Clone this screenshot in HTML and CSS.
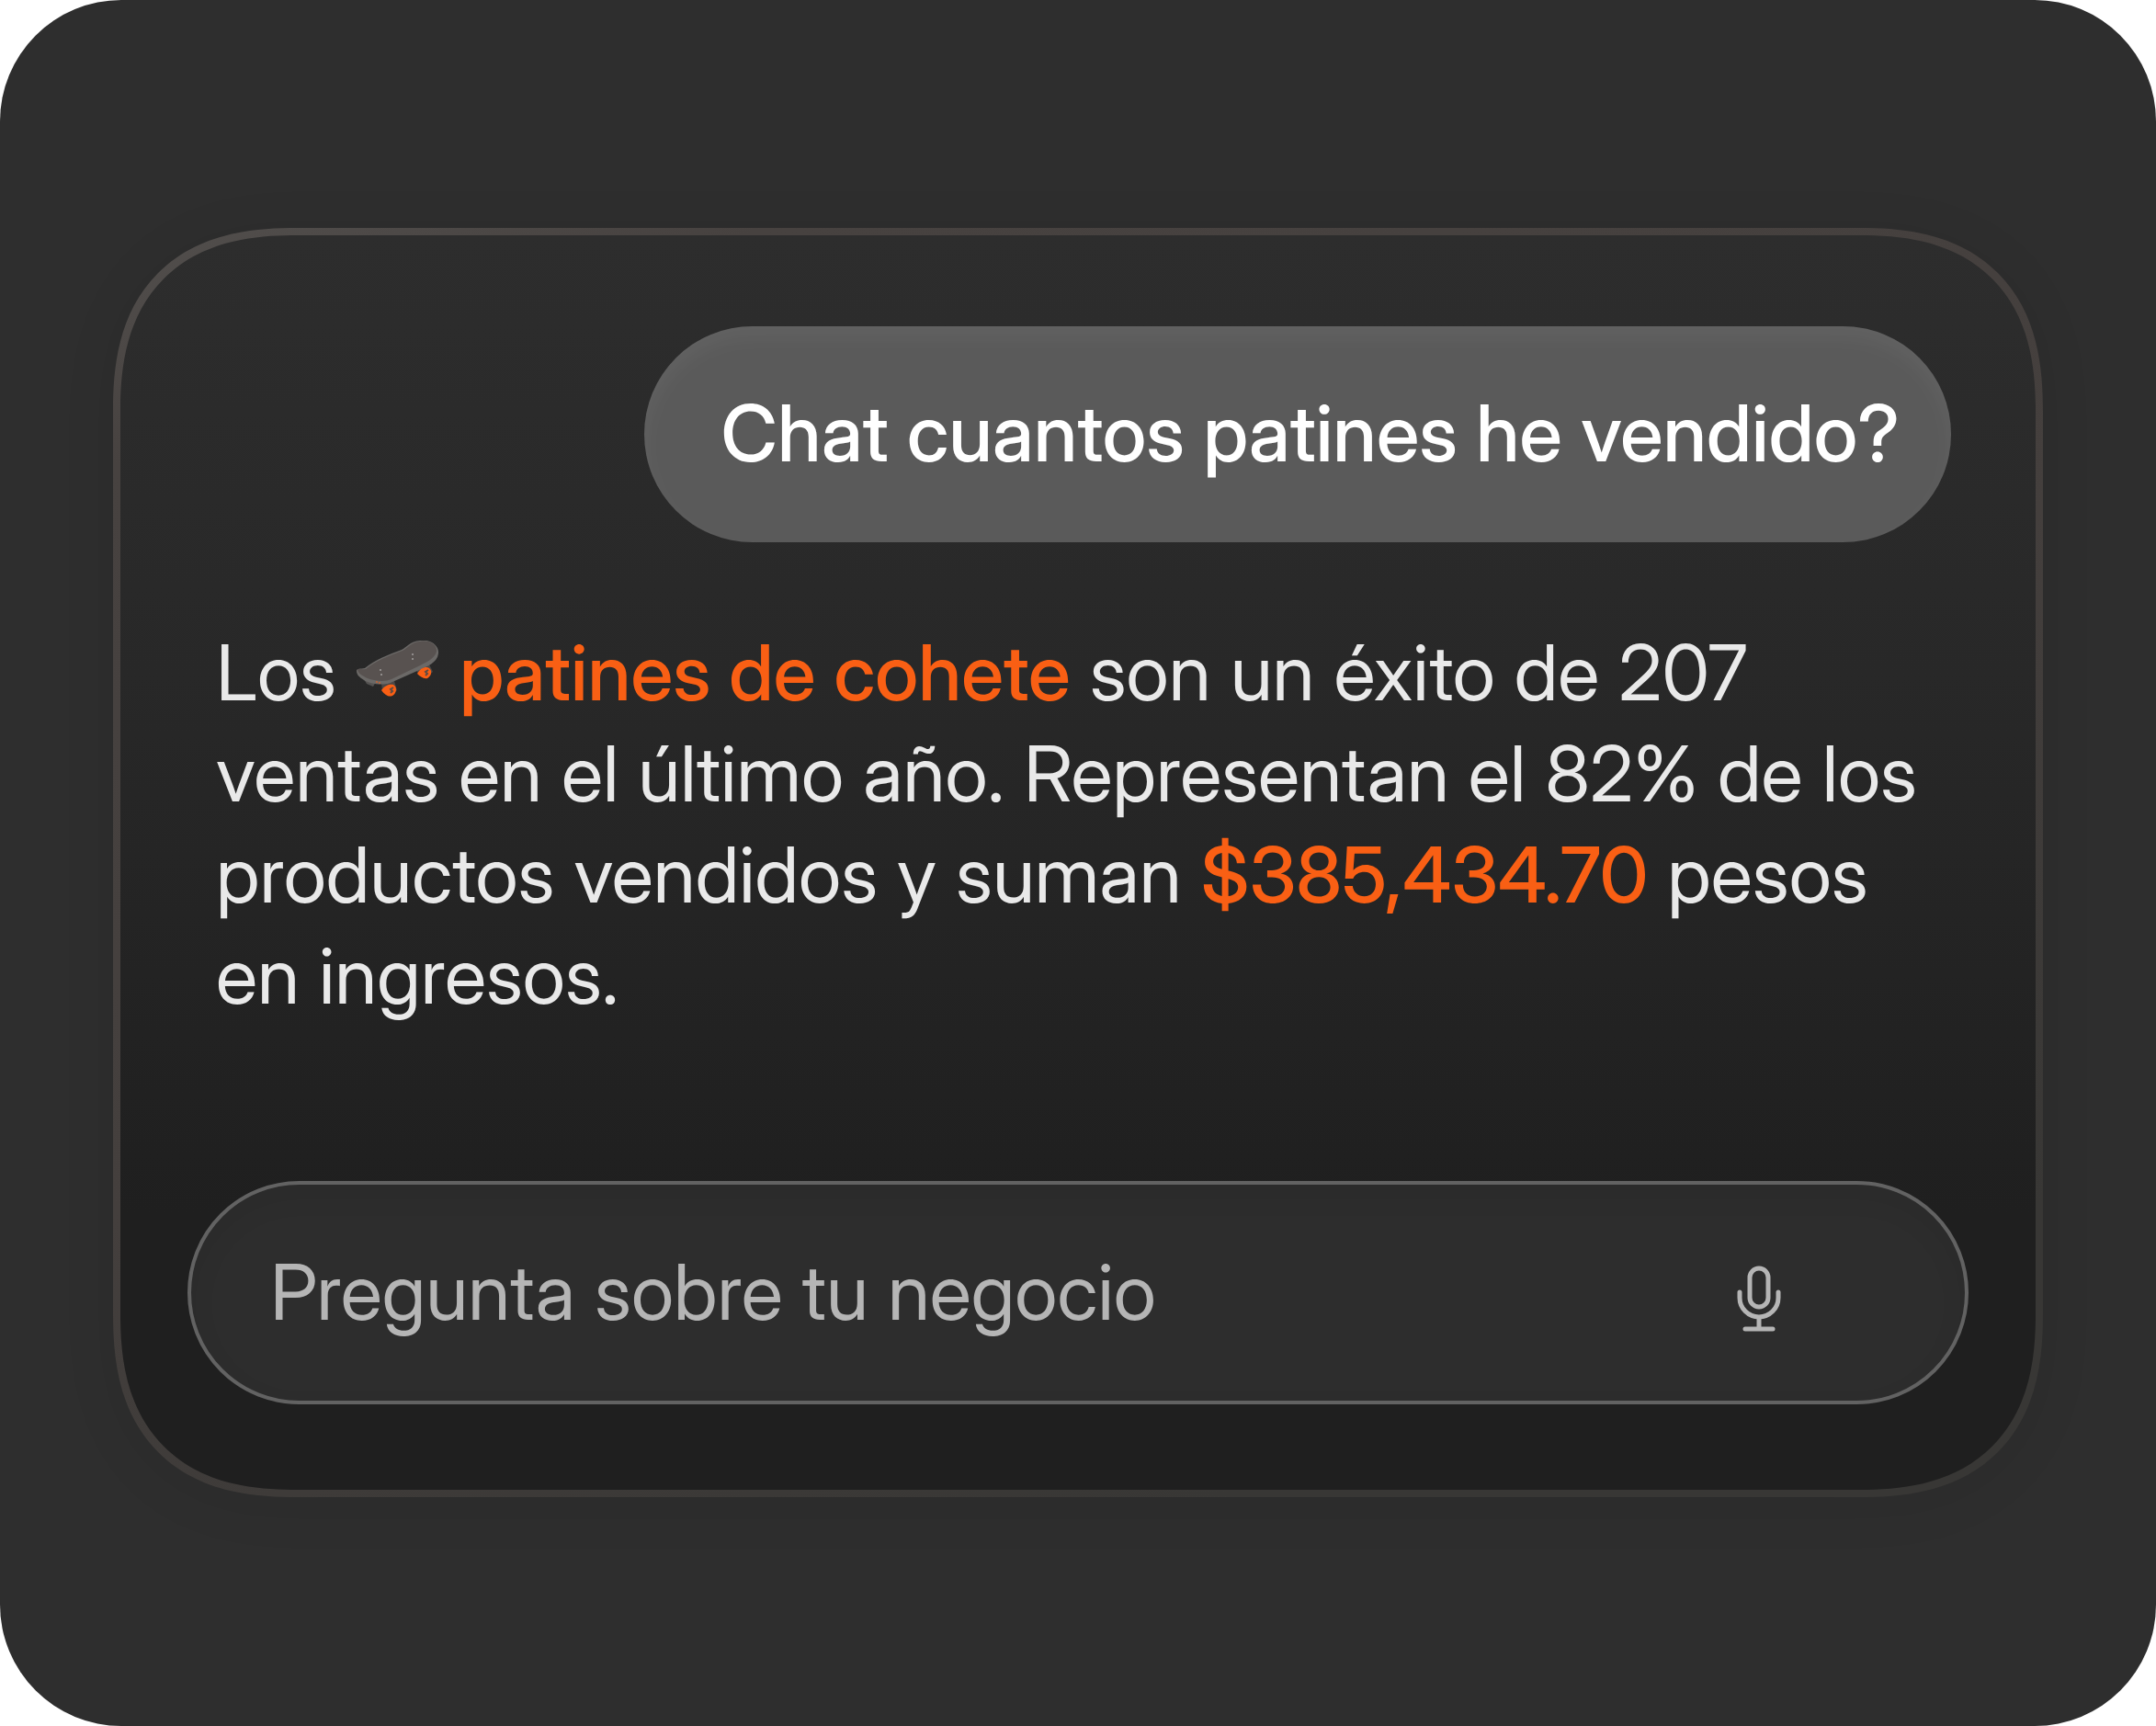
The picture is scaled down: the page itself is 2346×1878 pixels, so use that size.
FILE: index.html
```
<!DOCTYPE html>
<html lang="es">
<head>
    <meta charset="UTF-8">
    <meta name="viewport" content="width=device-width, initial-scale=1.0">
    <title>Chat de negocio</title>
    <link rel="stylesheet" href="styles.css">
</head>
<body>
    <main class="stage">
        <section class="panel">
            <p class="bubble">Chat cuantos patines he vendido?</p>

            <p class="answer">
                Los
                <svg class="skate" viewBox="0 0 92 62" aria-hidden="true">
                    <path d="M9 42 L22 45 L19 50 L12 47 Z" fill="#555352"/>
                    <path d="M66 32 L80 26 L84 34 L76 40 L68 36 Z" fill="#4a4847"/>
                    <path d="M28 47 L42 44 L45 54 L37 60 L29 54 Z" fill="#4a4847"/>
                    <path d="M1 33 C1 30 5 31 10 30 C21 21 36 15 50 10 C56 7 59 1 70 0 C82 -2 91 6 90 14 C89 24 78 28 67 33 L40 45 C31 50 15 47 9 43 C4 40 1 37 1 33 Z" fill="#6b6967"/>
                    <path d="M2 32 C2 30 6 32 11 31 C22 22 37 16 51 11 C57 8 60 2 70 1 C81 -1 89 5 88 12 C86 20 76 24 66 29 L39 42 C30 46 15 43 9 39 C5 37 3 35 2 32 Z" fill="#585250"/>
                    <g fill="#a3a19f">
                        <circle cx="27" cy="32" r="1"/>
                        <circle cx="28" cy="37" r="1"/>
                        <circle cx="62" cy="15" r="1"/>
                        <circle cx="62" cy="20" r="1"/>
                    </g>
                    <path d="M67 36 C71 29 77 28 80 30 C84 33 82 39 78 41 C74 42 70 39 67 36 Z" fill="#f95f14"/>
                    <path d="M28 54 C32 48 38 47 41 48 C46 51 44 58 40 60 C35 62 31 58 28 54 Z" fill="#f95f14"/>
                    <path d="M79 32 L76 34 L78 36 L76 38 M41 51 L38 53 L40 55 L38 57" fill="none" stroke="#5c4c44" stroke-width="2"/>
                    <path d="M22 45 H24 M25 46 H27" stroke="#f95f14" stroke-width="1"/>
                </svg>
                <strong>patines de cohete</strong>
                son un éxito de 207 ventas en el último año. Representan el 82% de los productos vendidos y suman <strong>$385,434.70</strong> pesos en ingresos.
            </p>

            <form class="ask">
                <input type="text" aria-label="Pregunta sobre tu negocio" placeholder="Pregunta sobre tu negocio">
                <button type="button" aria-label="Dictar">
                    <svg viewBox="0 0 48 72" fill="none" stroke="currentColor" stroke-width="5" stroke-linecap="round" aria-hidden="true">
                        <rect x="14" y="3" width="20" height="42" rx="10"/>
                        <path d="M3 29 V35 A21 21 0 0 0 45 35 V29 M24 56 V69 M9 69 H39"/>
                    </svg>
                </button>
            </form>
        </section>
    </main>
</body>
</html>
```
FILE: styles.css
```
* { box-sizing: border-box; }
body { margin: 0; background: #fff; font-family: "Inter Display", Inter, "Liberation Sans", sans-serif; font-size: 84px; line-height: 110px; color: #e9e9e9; }
p { margin: 0; }
.stage { min-height: 100vh; display: flex; align-items: center; padding: 80px 123px 82px; background: #2e2e2e; border-radius: 132px; }
.panel { flex: 1; min-width: 0; display: flex; flex-direction: column; padding: 99px 73px 93px; border: 8px solid transparent; border-radius: 160px; background: linear-gradient(#2d2d2d, #282828 35%, #1f1f1f 78%) padding-box, linear-gradient(160deg, #524f4d, #474240 12%, #443f3d 50%, #383735 85%) border-box; box-shadow: 0 8px 60px rgba(0, 0, 0, 0.08); }
@supports (corner-shape: superellipse(1.3)) {
    .panel { border-radius: 200px; corner-shape: superellipse(1.3); }
}
.bubble { align-self: flex-end; margin-right: 19px; padding: 62px 56px 63px 84px; border-radius: 118px; background: #5a5a5a; box-shadow: inset 0 12px 24px rgba(255, 255, 255, 0.05); color: #fff; font-size: 85px; font-weight: 500; }
.answer { margin: 87px 40px 168px 31px; }
.answer strong { color: #f95f14; font-weight: 500; }
.skate { width: 92px; height: 62px; vertical-align: 3px; }
.ask { display: flex; align-items: center; height: 243px; padding: 0 200px 0 86px; border: 4px solid #626262; border-radius: 122px; background: #2d2d2d; box-shadow: inset 0 12px 30px rgba(0, 0, 0, 0.06); }
.ask input { flex: 1; min-width: 0; padding: 0; border: none; outline: none; background: none; font: inherit; color: #b5b5b5; }
.ask input::placeholder { color: #b5b5b5; opacity: 1; }
.ask button { display: flex; margin-top: 14px; padding: 0; border: none; background: none; color: #b5b5b5; cursor: pointer; }
.ask button svg { width: 48px; height: 72px; }
```
